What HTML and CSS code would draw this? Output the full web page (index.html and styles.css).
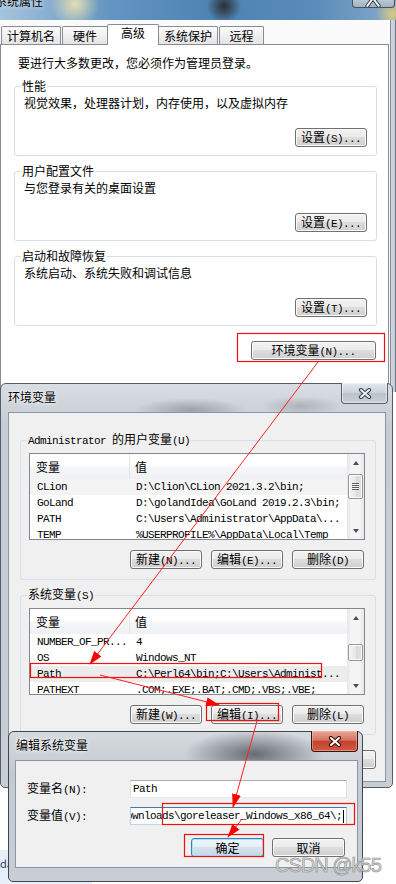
FILE: index.html
```html
<!DOCTYPE html>
<html lang="zh-CN">
<head>
    <meta charset="UTF-8">
    <meta name="viewport" content="width=device-width, initial-scale=1.0">
    <title>环境变量</title>
    <link rel="stylesheet" href="styles.css">
</head>
<body>
<div class="screen">

    <!-- 系统属性 (window behind) -->
    <div class="win sys">
        <div class="sys-title">
            <span class="sys-caption">系统属性</span>
            <div class="sys-close">
                <svg width="43" height="8" viewBox="0 0 43 8"><path d="M21 -2 L15 6 M21 -2 L27 6" stroke="#2f3a45" stroke-width="4" stroke-linecap="round"/><path d="M21 -2 L15 6 M21 -2 L27 6" stroke="#f4f6f8" stroke-width="2" stroke-linecap="round"/></svg>
            </div>
        </div>
        <div class="sys-main">
            <div class="sys-body">
                <div class="tabs">
                    <div class="tab t1">计算机名</div>
                    <div class="tab t2">硬件</div>
                    <div class="tab t3 active">高级</div>
                    <div class="tab t4">系统保护</div>
                    <div class="tab t5">远程</div>
                </div>
                <div class="tab-panel">
                    <p class="note">要进行大多数更改，您必须作为管理员登录。</p>
                    <fieldset class="group">
                        <legend>性能</legend>
                        <p>视觉效果，处理器计划，内存使用，以及虚拟内存</p>
                        <div class="btn-row"><button class="btn">设置<span class="lat">(S)...</span></button></div>
                    </fieldset>
                    <fieldset class="group">
                        <legend>用户配置文件</legend>
                        <p>与您登录有关的桌面设置</p>
                        <div class="btn-row"><button class="btn">设置<span class="lat">(E)...</span></button></div>
                    </fieldset>
                    <fieldset class="group">
                        <legend>启动和故障恢复</legend>
                        <p>系统启动、系统失败和调试信息</p>
                        <div class="btn-row"><button class="btn">设置<span class="lat">(T)...</span></button></div>
                    </fieldset>
                    <div class="btn-row env-row"><button class="btn wide">环境变量<span class="lat">(N)...</span></button></div>
                </div>
            </div>
            <div class="side-frame"></div>
        </div>
    </div>

    <!-- 环境变量 -->
    <div class="win env">
        <div class="titlebar">
            <span class="caption">环境变量</span>
            <div class="close grey">
                <svg width="14" height="11" viewBox="0 0 14 11"><path d="M3 2 L11 9 M11 2 L3 9" stroke="#3a4350" stroke-width="4.2" stroke-linecap="round"/><path d="M3 2 L11 9 M11 2 L3 9" stroke="#eef1f4" stroke-width="2" stroke-linecap="round"/></svg>
            </div>
        </div>
        <div class="client env-client">
            <fieldset class="group env-group">
                <legend><span class="lat">Administrator </span>的用户变量<span class="lat">(U)</span></legend>
                <div class="list">
                    <div class="list-cols">
                        <div class="list-head"><div class="c1">变量</div><div class="c2">值</div></div>
                        <div class="row hot"><div class="c1">CLion</div><div class="c2">D:\Clion\CLion 2021.3.2\bin;</div></div>
                        <div class="row"><div class="c1">GoLand</div><div class="c2">D:\golandIdea\GoLand 2019.2.3\bin;</div></div>
                        <div class="row"><div class="c1">PATH</div><div class="c2">C:\Users\Administrator\AppData\...</div></div>
                        <div class="row"><div class="c1">TEMP</div><div class="c2">%USERPROFILE%\AppData\Local\Temp</div></div>
                    </div>
                    <div class="vscroll">
                        <div class="arrow up"></div>
                        <div class="thumb grip user-thumb"></div>
                        <div class="arrow down"></div>
                    </div>
                </div>
                <div class="btn-row three">
                    <button class="btn">新建<span class="lat">(N)...</span></button>
                    <button class="btn">编辑<span class="lat">(E)...</span></button>
                    <button class="btn">删除<span class="lat">(D)</span></button>
                </div>
            </fieldset>
            <fieldset class="group env-group">
                <legend>系统变量<span class="lat">(S)</span></legend>
                <div class="list">
                    <div class="list-cols">
                        <div class="list-head"><div class="c1">变量</div><div class="c2">值</div></div>
                        <div class="row"><div class="c1">NUMBER_OF_PR...</div><div class="c2">4</div></div>
                        <div class="row"><div class="c1">OS</div><div class="c2">Windows_NT</div></div>
                        <div class="row sel"><div class="c1">Path</div><div class="c2">C:\Perl64\bin;C:\Users\Administ...</div></div>
                        <div class="row"><div class="c1">PATHEXT</div><div class="c2">.COM;.EXE;.BAT;.CMD;.VBS;.VBE;</div></div>
                    </div>
                    <div class="vscroll">
                        <div class="arrow up"></div>
                        <div class="thumb sys-thumb"></div>
                        <div class="arrow down"></div>
                    </div>
                </div>
                <div class="btn-row three">
                    <button class="btn">新建<span class="lat">(W)...</span></button>
                    <button class="btn">编辑<span class="lat">(I)...</span></button>
                    <button class="btn">删除<span class="lat">(L)</span></button>
                </div>
            </fieldset>
            <div class="btn-row dlg-row">
                <button class="btn">确定</button>
                <button class="btn">取消</button>
            </div>
        </div>
    </div>

    <div class="desk-snip">da</div>

    <!-- 编辑系统变量 -->
    <div class="win edit">
        <div class="titlebar">
            <span class="caption">编辑系统变量</span>
            <div class="close red">
                <svg width="14" height="11" viewBox="0 0 14 11"><path d="M3 2 L11 9 M11 2 L3 9" stroke="#3b0f0b" stroke-width="4.2" stroke-linecap="round"/><path d="M3 2 L11 9 M11 2 L3 9" stroke="#ffffff" stroke-width="2" stroke-linecap="round"/></svg>
            </div>
        </div>
        <div class="client edit-client">
            <div class="form">
                <label>变量名<span class="lat">(N):</span></label>
                <div class="field mono">Path</div>
                <label>变量值<span class="lat">(V):</span></label>
                <div class="field focus mono"><span class="scrolled">ownloads\goreleaser_Windows_x86_64\;</span><span class="caret"></span></div>
            </div>
            <div class="btn-row edit-row">
                <button class="btn default">确定</button>
                <button class="btn">取消</button>
            </div>
        </div>
    </div>

    <!-- red annotations -->
    <svg class="marks" width="396" height="884" viewBox="0 0 396 884">
        <defs>
            <marker id="ah" viewBox="0 0 14 9" refX="13" refY="4.5" markerWidth="14" markerHeight="9" markerUnits="userSpaceOnUse" orient="auto">
                <path d="M0 0 L14 4.5 L0 9 Z" fill="#ff0000"/>
            </marker>
        </defs>
        <g fill="none" stroke="#ee1111" stroke-width="1.2">
            <rect x="237.5" y="333.5" width="147" height="28"/>
            <rect x="30.5" y="663.5" width="291" height="14"/>
            <rect x="206.5" y="703.5" width="72" height="17"/>
            <rect x="162.5" y="803.5" width="192" height="21"/>
            <rect x="184.5" y="834.5" width="79" height="22"/>
        </g>
        <g stroke="#ff2020" stroke-width="1" marker-end="url(#ah)">
            <line x1="318" y1="362" x2="90" y2="664"/>
            <line x1="100" y1="675" x2="219" y2="705"/>
            <line x1="257" y1="721" x2="233" y2="807"/>
            <line x1="242" y1="819" x2="228" y2="837"/>
        </g>
    </svg>

    <div class="watermark">CSDN @k55</div>
</div>
</body>
</html>
```

FILE: styles.css
```css
* {
    margin: 0;
    padding: 0;
    box-sizing: border-box;
}

body {
    width: 396px;
    height: 884px;
    overflow: hidden;
    background: #fff;
    font-family: "Noto Sans CJK SC", sans-serif;
    font-size: 12px;
    line-height: 14px;
    color: #000;
}

.screen {
    position: relative;
    width: 396px;
    height: 884px;
    overflow: hidden;
}

/* latin runs inside the dialog font (half width) */
.lat,
.mono {
    font-family: "Liberation Mono", monospace;
    font-size: 11px;
    letter-spacing: -0.6px;
}

.win {
    position: absolute;
    display: flex;
    flex-direction: column;
}

/* ---------- 系统属性 ---------- */

.sys {
    left: 0;
    top: 0;
    width: 396px;
    height: 392px;
    z-index: 1;
}

.sys-title {
    height: 20px;
    display: flex;
    align-items: flex-start;
    overflow: hidden;
    background:
        radial-gradient(circle at 75px 4px, rgba(240, 228, 178, 0.9) 0, rgba(240, 228, 178, 0) 24px),
        radial-gradient(circle at 224px 6px, rgba(34, 32, 30, 0.85) 0, rgba(34, 32, 30, 0) 17px),
        radial-gradient(circle at 392px 14px, rgba(226, 204, 120, 0.9) 0, rgba(226, 204, 120, 0) 16px),
        linear-gradient(90deg, #a6c3dc, #6395c1 28%, #4d82b2 55%, #5a8cba 80%, #87abc9 100%);
}

.sys-caption {
    margin: -6px 0 0 -5px;
    text-shadow: 0 0 5px rgba(255, 255, 255, 0.9);
}

.sys-close {
    margin-left: auto;
    margin-right: 1px;
    width: 43px;
    height: 8px;
    border: 1px solid #46525f;
    border-top: 0;
    border-radius: 0 0 4px 4px;
    background: linear-gradient(#b9c6d3, #a3b2c1);
    overflow: hidden;
    display: flex;
}

.sys-main {
    flex: 1;
    display: flex;
    background: #fafafa;
}

.sys-body {
    width: 390px;
    padding-top: 4px;
    display: flex;
    flex-direction: column;
}

.side-frame {
    flex: 1;
    background: linear-gradient(90deg, #7f8b97 0, #7f8b97 1px, #d2d9e0 1px, #c3ccd5 5px, #6f7a86 5px);
}

.tabs {
    height: 20px;
    display: flex;
    align-items: flex-end;
    padding-left: 1px;
    position: relative;
    z-index: 1;
}

.tab {
    height: 18px;
    border: 1px solid #898c95;
    border-bottom: 0;
    border-radius: 2px 2px 0 0;
    background: linear-gradient(#fbfbfb, #e4e4e4);
    text-align: center;
    line-height: 17px;
}

.tab.active {
    height: 21px;
    margin-bottom: -1px;
    background: #fff;
    line-height: 16px;
}

.t1 { width: 60px; }
.t2 { width: 46px; margin-left: 1px; }
.t3 { width: 52px; margin-left: -1px; }
.t4 { width: 60px; margin-left: -1px; }
.t5 { width: 45px; margin-left: 1px; }

.tab-panel {
    flex: 1;
    width: 389px;
    border: 1px solid #898c95;
    border-bottom: 0;
    background: #fff;
    padding: 11px 11px 0 13px;
}

.note {
    padding-left: 4px;
}

.group {
    min-width: 0;
    margin-top: 8px;
    border: 1px solid #d5dfe5;
    border-radius: 3px;
    padding: 3px 9px 8px 9px;
}

.note + .group {
    margin-top: 9px;
}

/* legend sits inside the fieldset padding */
.group legend {
    margin-left: -3px;
    padding: 0 1px;
}

.btn-row {
    display: flex;
    justify-content: flex-end;
    margin-top: 18px;
}

.btn {
    width: 72px;
    height: 19px;
    padding: 0;
    font: inherit;
    line-height: 15px;
    color: #000;
    border: 1px solid #707070;
    border-radius: 3px;
    background: linear-gradient(#f2f2f2 0%, #ebebeb 49%, #dddddd 50%, #cfcfcf 100%);
    box-shadow: inset 0 0 0 1px #fbfbfb;
}

.btn.wide {
    width: 125px;
}

.env-row {
    margin-top: 15px;
    padding-right: 1px;
}

/* ---------- dialog frames ---------- */

.titlebar {
    height: 28px;
    display: flex;
    align-items: flex-start;
}

.caption {
    margin: 6px 0 0 7px;
    text-shadow: 0 0 5px rgba(255, 255, 255, 0.95), 0 0 2px rgba(255, 255, 255, 0.9);
}

.close {
    margin-left: auto;
    margin-right: 4px;
    margin-top: -1px;
    width: 47px;
    height: 21px;
    border: 1px solid #56606c;
    border-top: 0;
    border-radius: 0 0 4px 4px;
    display: flex;
    align-items: center;
    justify-content: center;
}

.close.grey {
    background: linear-gradient(#e3e8ed, #cbd2d9 50%, #b9c2cb 51%, #c9d0d7);
    box-shadow: inset 0 0 0 1px rgba(255, 255, 255, 0.5);
}

.close.red {
    border-color: #3b1410;
    background: linear-gradient(#e8a897, #d77462 45%, #c2432e 52%, #cf5a43 100%);
    box-shadow: inset 0 0 0 1px rgba(255, 200, 190, 0.45);
}

.client {
    border: 1px solid #8a96a3;
    background: #f0f0f0;
}

/* ---------- 环境变量 ---------- */

.env {
    left: 0;
    top: 383px;
    width: 393px;
    height: 405px;
    z-index: 2;
    border: 1px solid #535d69;
    border-radius: 6px 6px 5px 5px;
    background:
        radial-gradient(ellipse 55px 12px at 190px 26px, rgba(95, 100, 106, 0.45), rgba(95, 100, 106, 0)),
        radial-gradient(ellipse 40px 10px at 300px 22px, rgba(110, 115, 120, 0.35), rgba(110, 115, 120, 0)),
        linear-gradient(#d9dee3, #c5ccd3 40px, #c7ced5);
}

.env-client {
    height: 370px;
    margin: 0 6px 0 7px;
    padding: 19px 9px 0 11px;
}

.env-group {
    margin-top: 7px;
    padding: 5px 10px 10px 8px;
}

.env-group:first-child {
    margin-top: 0;
}

.env-group legend {
    margin-left: -2px;
}

.list {
    height: 87px;
    border: 1px solid #828790;
    background: #fff;
    display: flex;
    overflow: hidden;
}

.list-cols {
    flex: 1;
    overflow: hidden;
}

.list-head {
    height: 25px;
    display: flex;
    line-height: 25px;
    background: linear-gradient(#fff 0%, #fff 45%, #f5f6f8 55%, #eff1f4 100%);
}

.list-head .c1 {
    width: 100px;
    padding-left: 6px;
    border-right: 1px solid #e3e5e8;
}

.list-head .c2 {
    padding-left: 5px;
}

.row {
    height: 16px;
    display: flex;
    line-height: 16px;
    white-space: nowrap;
    font-family: "Liberation Mono", monospace;
    font-size: 11px;
    letter-spacing: -0.6px;
}

.row .c1 {
    width: 100px;
    flex-shrink: 0;
    padding-left: 7px;
}

.row .c2 {
    padding-left: 6px;
}

.row.hot {
    background: #f4f4f4;
}

.row.sel {
    background: #ececec;
}

.vscroll {
    width: 17px;
    flex-shrink: 0;
    display: flex;
    flex-direction: column;
    background: linear-gradient(90deg, #e6e6e6, #f4f4f4 25%, #f4f4f4 75%, #e6e6e6);
}

.arrow {
    height: 17px;
    display: flex;
    align-items: center;
    justify-content: center;
}

.arrow::before {
    content: "";
    border-left: 3.5px solid transparent;
    border-right: 3.5px solid transparent;
    border-bottom: 4px solid #4d4d4d;
}

.arrow.down {
    margin-top: auto;
}

.arrow.down::before {
    border-bottom: 0;
    border-top: 4px solid #4d4d4d;
}

.thumb {
    margin: 3px 1px 0;
    height: 25px;
    border: 1px solid #979797;
    border-radius: 2px;
    background: linear-gradient(90deg, #f5f5f5, #e7e7e7 50%, #d9d9d9 51%, #e2e2e2);
    box-shadow: inset 0 0 0 1px #fbfbfb;
    display: flex;
    align-items: center;
    justify-content: center;
}

.thumb.grip::after {
    content: "";
    width: 7px;
    height: 7px;
    background: repeating-linear-gradient(#5f5f5f 0, #5f5f5f 1px, #f2f2f2 1px, #f2f2f2 2px);
}

.sys-thumb {
    margin-top: 18px;
    height: 17px;
}

.btn-row.three {
    margin-top: 10px;
    gap: 9px;
    padding-right: 1px;
}

.dlg-row {
    margin-top: 15px;
    gap: 8px;
}

/* ---------- 编辑系统变量 ---------- */

.desk-snip {
    position: absolute;
    left: 0;
    top: 850px;
    width: 92px;
    height: 34px;
    padding-top: 7px;
    background: #e6eefa;
    color: #1d3b6a;
    font-size: 11px;
    line-height: 12px;
    z-index: 0;
}

.edit {
    left: 8px;
    top: 731px;
    width: 355px;
    height: 151px;
    z-index: 3;
    border: 1px solid #3f4751;
    border-radius: 6px 6px 5px 5px;
    background:
        radial-gradient(ellipse 70px 24px at 245px 22px, rgba(70, 74, 80, 0.75), rgba(70, 74, 80, 0)),
        linear-gradient(#d5dade, #c4cad1 40px, #c8ced4);
}

.edit-client {
    height: 108px;
    margin: 0 4px 0 6px;
    padding: 19px 10px 0 11px;
}

.form {
    display: grid;
    grid-template-columns: 103px 1fr;
    row-gap: 9px;
    align-items: center;
}

.field {
    height: 18px;
    border: 1px solid;
    border-color: #abadb3 #dbdfe6 #e3e9ef #e2e3ea;
    background: #fff;
    padding-left: 2px;
    line-height: 16px;
    white-space: nowrap;
    overflow: hidden;
    display: flex;
    align-items: center;
}

.field.focus {
    padding-left: 0;
    border-color: #3d7bad #a4c9e3 #b7d9ed #b5cfe7;
}

.scrolled {
    margin-left: -5px;
}

.caret {
    width: 1px;
    height: 13px;
    margin-left: 1px;
    background: #000;
}

.edit-row {
    margin-top: 13px;
    gap: 8px;
    padding-right: 2px;
}

.edit-row .btn {
    width: 73px;
}

.btn.default {
    border-color: #3c7fb1;
    background: linear-gradient(#eef6fb 0%, #e4eef5 49%, #d3e2ec 50%, #c6d8e6 100%);
    box-shadow: inset 0 0 0 1px #a9e0fa;
}

/* ---------- overlays ---------- */

.marks {
    position: absolute;
    left: 0;
    top: 0;
    z-index: 4;
    pointer-events: none;
}

.watermark {
    position: absolute;
    left: 275px;
    top: 855px;
    z-index: 5;
    font-family: "Liberation Sans", sans-serif;
    font-size: 20px;
    line-height: 20px;
    letter-spacing: -1px;
    color: rgba(214, 214, 214, 0.95);
    -webkit-text-stroke: 0.6px #8f8f8f;
}
```
